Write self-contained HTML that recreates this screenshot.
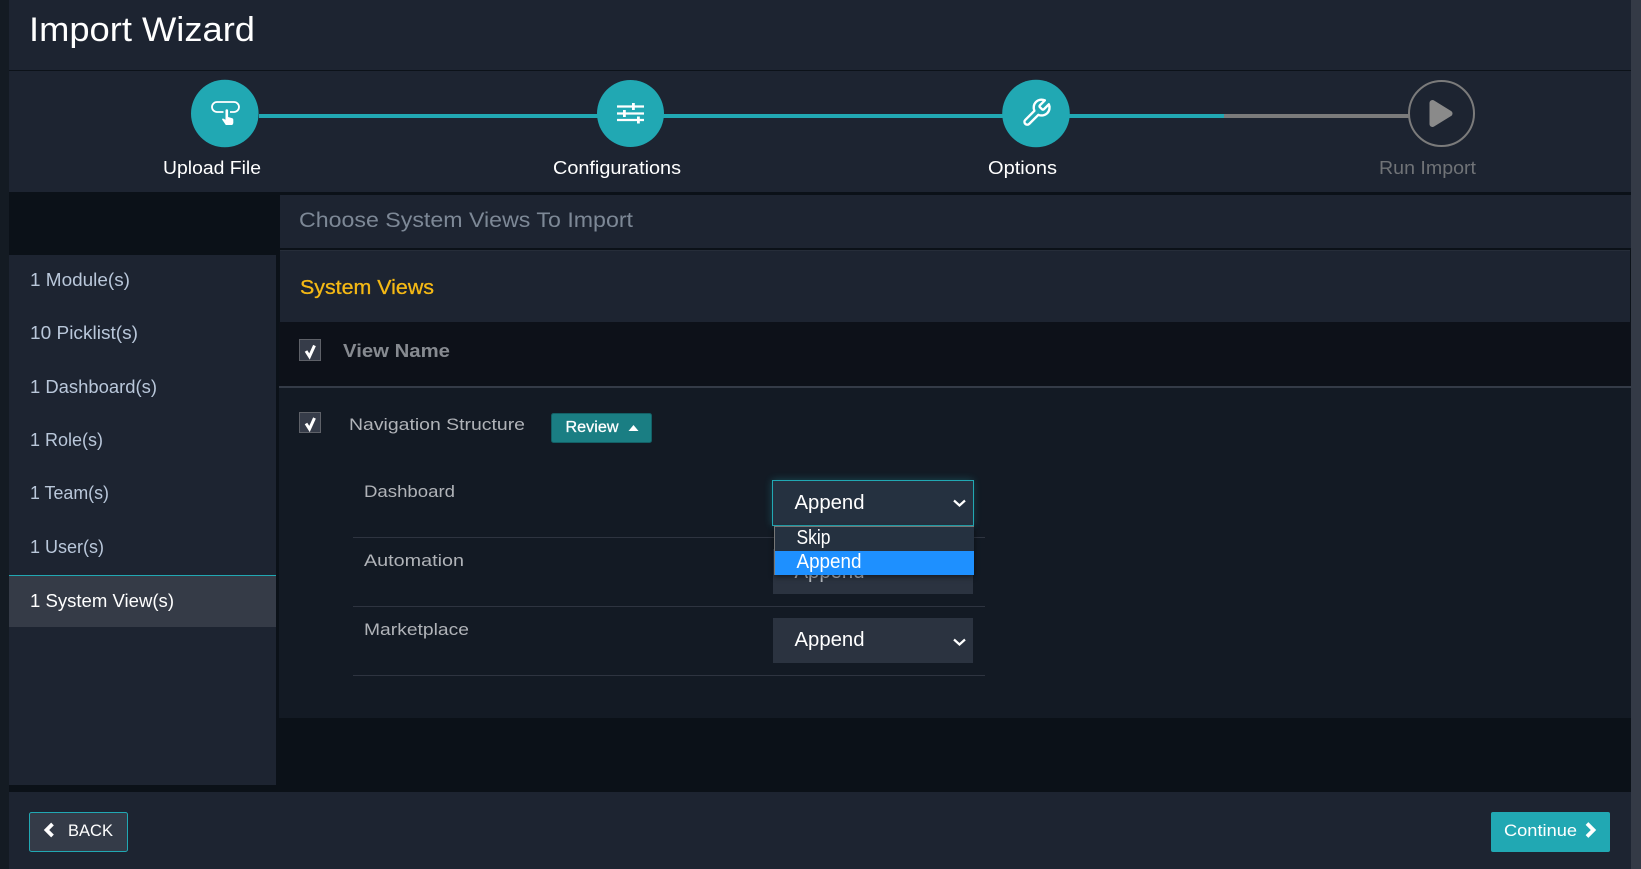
<!DOCTYPE html>
<html><head><meta charset="utf-8"><title>Import Wizard</title>
<style>
html,body{margin:0;padding:0;width:1641px;height:869px;overflow:hidden;background:#0b1118}
svg{display:block}
text{font-family:"Liberation Sans",Arial,sans-serif;white-space:pre}
.s{fill:#b9c7da;font-size:18px}
.l{fill:#b0b3b8;font-size:17px}
.a{fill:#fff;font-size:20.5px}
.st{fill:#fff;font-size:18px}
</style></head><body>
<svg width="1641" height="869" viewBox="0 0 1641 869" xmlns="http://www.w3.org/2000/svg">
<defs>
<filter id="g" x="-20%" y="-40%" width="140%" height="180%"><feGaussianBlur stdDeviation="4"/></filter>
<filter id="d" x="-20%" y="-40%" width="140%" height="180%"><feGaussianBlur stdDeviation="3"/></filter>
</defs>
<rect width="1641" height="869" fill="#0b1118"/>
<rect x="0" y="0" width="9" height="869" fill="#141b23"/>
<rect x="1631" y="0" width="10" height="869" fill="#343a46"/>
<!-- header -->
<rect x="9" y="0" width="1622" height="70" fill="#1d2431"/>
<rect x="9" y="70" width="1622" height="1" fill="#0c1219"/>
<rect x="9" y="71" width="1622" height="121" fill="#1d2431"/>
<text x="29" y="41" font-size="34.500" fill="#fff" textLength="226" lengthAdjust="spacingAndGlyphs">Import Wizard</text>
<!-- stepper -->
<rect x="259" y="114" width="965" height="4" fill="#21a8b3"/>
<rect x="1224" y="114" width="186" height="4" fill="#7b7b7b"/>
<circle cx="224.800" cy="113.500" r="33.800" fill="#21a8b3"/>
<circle cx="630.500" cy="113.500" r="33.500" fill="#21a8b3"/>
<circle cx="1036" cy="113.500" r="33.800" fill="#21a8b3"/>
<circle cx="1441.500" cy="113.500" r="32.500" fill="#1d2431" stroke="#7b7b7b" stroke-width="2"/>
<!-- touch icon -->
<path d="M223.500 112h-6.500a5 5 0 0 1 0-10h17a5 5 0 0 1 0 10h-4" fill="none" stroke="#fff" stroke-width="1.800"/>
<path d="M225.500 110.500a1.300 1.300 0 0 1 2.600 0v6.500l4.200 1.200a1.500 1.500 0 0 1 1 1.500v3.500l-1 1.800h-6.500l-3.800-5.600 0.800-1 2.700 1.400z" fill="#fff"/>
<!-- sliders icon -->
<g stroke="#fff" fill="#fff">
<path d="M617 106.500h27M617 113.500h27M617 120h27" stroke-width="2.200" fill="none"/>
<rect x="632" y="103" width="2.800" height="7" stroke="none"/>
<rect x="623" y="110" width="2.800" height="7" stroke="none"/>
<rect x="637" y="116.500" width="2.800" height="7" stroke="none"/>
</g>
<!-- wrench icon -->
<g transform="translate(1020.500 97) scale(1.320)"><path d="M14.700 6.300a1 1 0 0 0 0 1.400l1.600 1.600a1 1 0 0 0 1.400 0l3.770-3.770a6 6 0 0 1-7.940 7.940l-6.910 6.910a2.120 2.120 0 0 1-3-3l6.910-6.910a6 6 0 0 1 7.940-7.940l-3.760 3.760z" fill="none" stroke="#fff" stroke-width="1.800" stroke-linejoin="round"/></g>
<!-- play icon -->
<path d="M1432.500 103L1449.500 113.500L1432.500 124Z" fill="#8a8a8a" stroke="#8a8a8a" stroke-width="6" stroke-linejoin="round"/>
<text class="st" x="163" y="174" textLength="98" lengthAdjust="spacingAndGlyphs">Upload File</text>
<text class="st" x="553" y="174" textLength="128" lengthAdjust="spacingAndGlyphs">Configurations</text>
<text class="st" x="988" y="174" textLength="69" lengthAdjust="spacingAndGlyphs">Options</text>
<text class="st" x="1379" y="174" textLength="97" lengthAdjust="spacingAndGlyphs" style="fill:#707377">Run Import</text>
<!-- panel titles -->
<rect x="280" y="195" width="1351" height="53" fill="#1d2431"/>
<text x="299" y="227" font-size="21.500" fill="#7d8896" textLength="334" lengthAdjust="spacingAndGlyphs">Choose System Views To Import</text>
<rect x="280" y="250" width="1350" height="72" fill="#1d2431"/>
<rect x="280" y="250" width="1350" height="1" fill="#262d39"/>
<text x="300" y="294" font-size="20" fill="#f5b915" stroke="#f5b915" stroke-width=".3" textLength="134" lengthAdjust="spacingAndGlyphs">System Views</text>
<!-- sidebar -->
<rect x="9" y="255" width="267" height="530" fill="#1d2431"/>
<text class="s" x="30" y="286" textLength="100" lengthAdjust="spacingAndGlyphs">1 Module(s)</text>
<text class="s" x="30" y="339" textLength="108" lengthAdjust="spacingAndGlyphs">10 Picklist(s)</text>
<text class="s" x="30" y="393" textLength="127" lengthAdjust="spacingAndGlyphs">1 Dashboard(s)</text>
<text class="s" x="30" y="446" textLength="73" lengthAdjust="spacingAndGlyphs">1 Role(s)</text>
<text class="s" x="30" y="499" textLength="79" lengthAdjust="spacingAndGlyphs">1 Team(s)</text>
<text class="s" x="30" y="553" textLength="74" lengthAdjust="spacingAndGlyphs">1 User(s)</text>
<rect x="9" y="575" width="267" height="52" fill="#353b47"/>
<rect x="9" y="575" width="267" height="1" fill="#21a8b3"/>
<text class="s" x="30" y="607" textLength="144" lengthAdjust="spacingAndGlyphs" style="fill:#fff">1 System View(s)</text>
<!-- table -->
<rect x="279" y="322" width="1352" height="64" fill="#0d1119"/>
<rect x="279" y="386" width="1352" height="2" fill="#343b47"/>
<rect x="279" y="388" width="1352" height="330" fill="#131a24"/>
<rect x="299.500" y="339.500" width="21" height="21" fill="#363c49" stroke="#5e6168"/>
<path d="M306 351L309.500 356.500L314.500 345.500" fill="none" stroke="#fff" stroke-width="3"/>
<text x="343" y="357" font-size="18.500" font-weight="bold" fill="#868a90" textLength="107" lengthAdjust="spacingAndGlyphs">View Name</text>
<rect x="299.500" y="412.500" width="21" height="20" fill="#363c49" stroke="#5e6168"/>
<path d="M306 423.500L309.500 429L314.500 418" fill="none" stroke="#fff" stroke-width="3"/>
<text class="l" x="349" y="430" textLength="176" lengthAdjust="spacingAndGlyphs">Navigation Structure</text>
<rect x="551.500" y="413.500" width="100" height="29" rx="2" fill="#1a7e83" stroke="#136066"/>
<text x="565.500" y="432" font-size="15.500" fill="#fff" stroke="#fff" stroke-width=".25" textLength="53" lengthAdjust="spacingAndGlyphs">Review</text>
<path d="M628.500 431L633.500 425L638.500 431Z" fill="#fff"/>
<text class="l" x="364" y="497" textLength="91" lengthAdjust="spacingAndGlyphs">Dashboard</text>
<text class="l" x="364" y="566" textLength="100" lengthAdjust="spacingAndGlyphs">Automation</text>
<text class="l" x="364" y="635" textLength="105" lengthAdjust="spacingAndGlyphs">Marketplace</text>
<rect x="353" y="537" width="632" height="1" fill="#2e3440"/>
<rect x="353" y="606" width="632" height="1" fill="#2e3440"/>
<rect x="353" y="675" width="632" height="1" fill="#2e3440"/>
<!-- selects -->
<rect x="773" y="549" width="200" height="45" fill="#2b3340"/>
<text class="a" x="794.500" y="578" textLength="70" lengthAdjust="spacingAndGlyphs" style="fill:#b8bcc2">Append</text>
<rect x="773" y="618" width="200" height="45" fill="#2b3340"/>
<text class="a" x="794.500" y="646" textLength="70" lengthAdjust="spacingAndGlyphs">Append</text>
<path d="M954 639.500L959.500 644.500L965 639.500" fill="none" stroke="#fff" stroke-width="2.200"/>
<rect x="772" y="480" width="201" height="45" fill="#21a8b3" opacity=".35" filter="url(#g)"/>
<rect x="772.500" y="480.500" width="201" height="45" fill="#253140" stroke="#21a8b3"/>
<text class="a" x="794.500" y="509" textLength="70" lengthAdjust="spacingAndGlyphs">Append</text>
<path d="M954 500.500L959.500 505.500L965 500.500" fill="none" stroke="#fff" stroke-width="2.200"/>
<rect x="774" y="528" width="200" height="49" fill="#000" opacity=".5" filter="url(#d)"/>
<rect x="774" y="526" width="200" height="49" fill="#767676"/>
<rect x="775" y="527" width="199" height="24" fill="#253140"/>
<rect x="775" y="551" width="199" height="24" fill="#1e90ff"/>
<text class="a" x="796.500" y="544" textLength="34" lengthAdjust="spacingAndGlyphs">Skip</text>
<text class="a" x="796.500" y="568" textLength="65" lengthAdjust="spacingAndGlyphs">Append</text>
<!-- footer -->
<rect x="9" y="792" width="1622" height="77" fill="#1d2431"/>
<rect x="29.500" y="812.500" width="98" height="39" rx="2" fill="#343b48" stroke="#21a8b3"/>
<path d="M52.500 824L46.500 830L52.500 836" fill="none" stroke="#fff" stroke-width="3.800"/>
<text x="68" y="836" font-size="16.500" fill="#fff" textLength="45" lengthAdjust="spacingAndGlyphs">BACK</text>
<rect x="1491" y="812" width="119" height="40" rx="2" fill="#21a8b3"/>
<text x="1504" y="836" font-size="16.500" fill="#fff" textLength="73" lengthAdjust="spacingAndGlyphs">Continue</text>
<path d="M1587 823.500L1593.500 830L1587 836.500" fill="none" stroke="#fff" stroke-width="3.800"/>
</svg>
</body></html>
